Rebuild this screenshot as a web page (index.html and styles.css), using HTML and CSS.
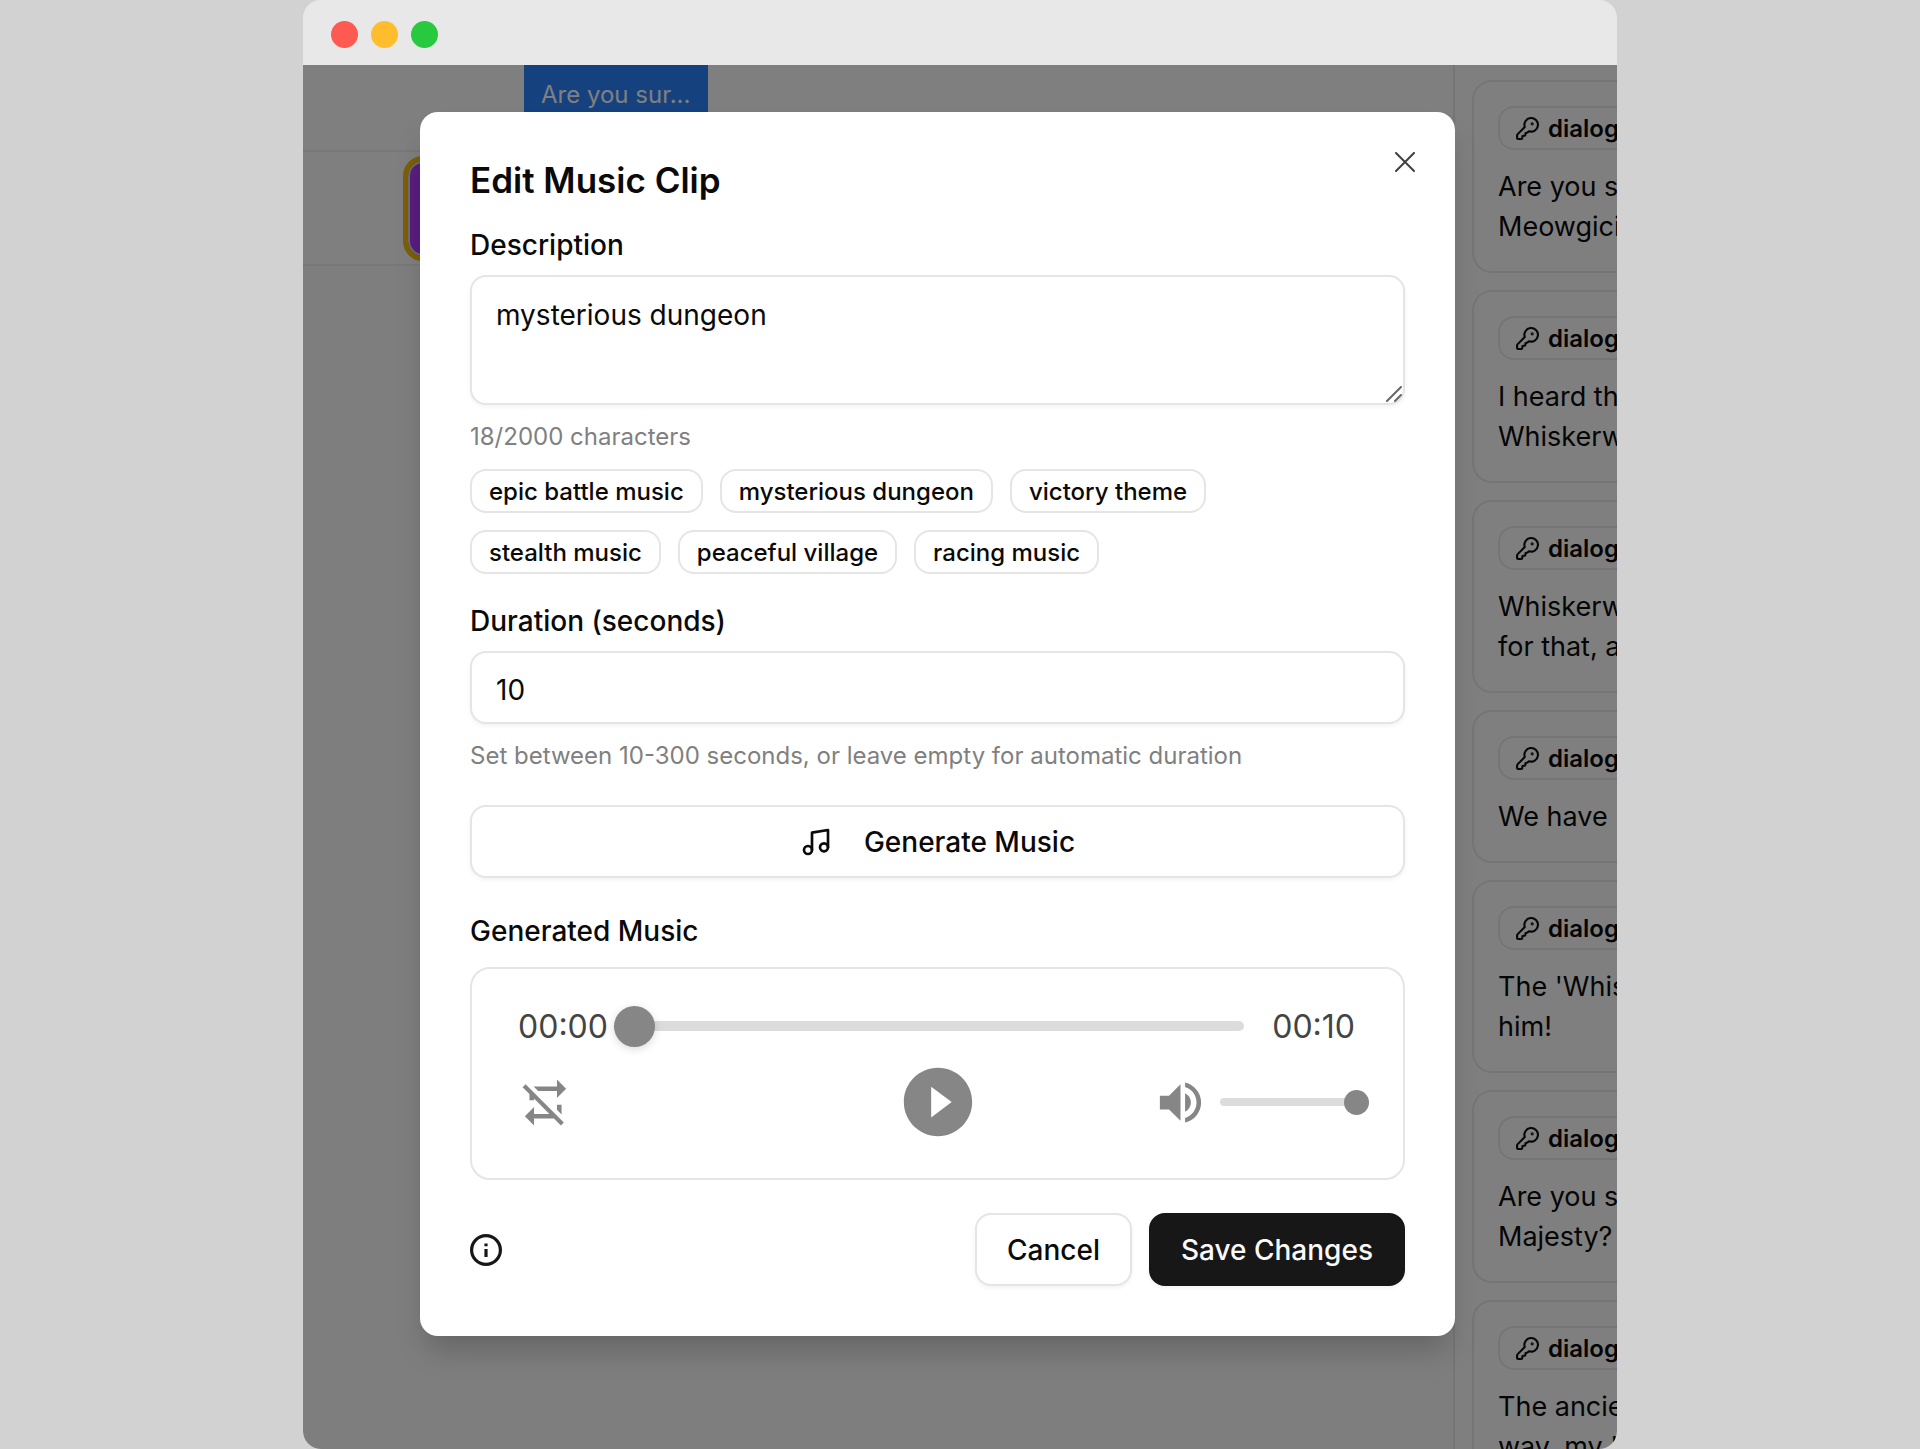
FILE: index.html
```html
<!DOCTYPE html>
<html lang="en">
<head>
    <meta charset="UTF-8">
    <meta name="viewport" content="width=device-width, initial-scale=1.0">
    <title>Edit Music Clip</title>
    <link rel="stylesheet" href="styles.css">
</head>
<body>

    <!-- shared icons -->
    <svg class="sprite" aria-hidden="true">
        <symbol id="icon-key" viewBox="0 0 24 24">
            <path d="M2.6 17.4A2 2 0 0 0 2 18.8V21a1 1 0 0 0 1 1h3a1 1 0 0 0 1-1v-1a1 1 0 0 1 1-1h1a1 1 0 0 0 1-1v-1a1 1 0 0 1 1-1h.2a2 2 0 0 0 1.4-.6l.8-.8a6.500 6.500 0 1 0-4-4z"/>
            <circle cx="16.500" cy="7.500" r=".5" fill="currentColor"/>
        </symbol>
    </svg>

    <div class="window">
        <div class="titlebar">
            <span class="dot red"></span>
            <span class="dot yellow"></span>
            <span class="dot green"></span>
        </div>

        <div class="app">
            <main class="timeline">
                <div class="track voice-track">
                    <div class="voice-clip">Are you sur...</div>
                </div>
                <div class="track music-track">
                    <div class="music-clip"></div>
                </div>
            </main>

            <aside class="dialogs">
                <div class="dialog-list">
                    <article class="card">
                        <span class="tag"><svg><use href="#icon-key"/></svg>dialog</span>
                        <p>Are you s<br>Meowgici</p>
                    </article>
                    <article class="card">
                        <span class="tag"><svg><use href="#icon-key"/></svg>dialog</span>
                        <p>I heard th<br>Whiskerw</p>
                    </article>
                    <article class="card">
                        <span class="tag"><svg><use href="#icon-key"/></svg>dialog</span>
                        <p>Whiskerw<br>for that, a</p>
                    </article>
                    <article class="card">
                        <span class="tag"><svg><use href="#icon-key"/></svg>dialog</span>
                        <p>We have</p>
                    </article>
                    <article class="card">
                        <span class="tag"><svg><use href="#icon-key"/></svg>dialog</span>
                        <p>The 'Whis<br>him!</p>
                    </article>
                    <article class="card">
                        <span class="tag"><svg><use href="#icon-key"/></svg>dialog</span>
                        <p>Are you s<br>Majesty?</p>
                    </article>
                    <article class="card">
                        <span class="tag"><svg><use href="#icon-key"/></svg>dialog</span>
                        <p>The ancie<br>way, my '</p>
                    </article>
                </div>
            </aside>

            <div class="overlay">
                <form class="modal" role="dialog" aria-labelledby="modal-title">
                    <button type="button" class="close" aria-label="Close">
                        <svg viewBox="0 0 20 20"><path d="M1 1l18 18M19 1L1 19"/></svg>
                    </button>

                    <h2 id="modal-title">Edit Music Clip</h2>

                    <div class="form-group">
                        <label for="description">Description</label>
                        <div class="textarea-wrap">
                            <textarea id="description" name="description">mysterious dungeon</textarea>
                            <svg class="grip" viewBox="0 0 16 16"><path d="M1 15L15 1M9 15l6-6"/></svg>
                        </div>
                        <p class="hint">18/2000 characters</p>
                        <div class="chips">
                            <button type="button" class="chip">epic battle music</button>
                            <button type="button" class="chip">mysterious dungeon</button>
                            <button type="button" class="chip">victory theme</button>
                            <button type="button" class="chip">stealth music</button>
                            <button type="button" class="chip">peaceful village</button>
                            <button type="button" class="chip">racing music</button>
                        </div>
                    </div>

                    <div class="form-group">
                        <label for="duration">Duration (seconds)</label>
                        <input type="number" id="duration" name="duration" class="text-input" value="10" min="10" max="300">
                        <p class="hint">Set between 10-300 seconds, or leave empty for automatic duration</p>
                    </div>

                    <button type="button" class="btn btn-generate">
                        <svg viewBox="0 0 24 24"><path d="M9 18V5l12-2v13"/><circle cx="6" cy="18" r="3"/><circle cx="18" cy="16" r="3"/></svg>
                        Generate Music
                    </button>

                    <div class="form-group">
                        <h3>Generated Music</h3>
                        <div class="player">
                            <div class="progress">
                                <span>00:00</span>
                                <input type="range" class="seek" aria-label="Seek" min="0" max="10" value="0">
                                <span>00:10</span>
                            </div>
                            <div class="controls">
                                <button type="button" class="icon-btn loop" aria-label="Loop off">
                                    <svg viewBox="0 0 24 24"><path d="M2 5.300L3.300 4 20 20.700 18.700 22l-3-3H7v3l-4-4 4-4v3h6.700L7 10.300V11H5V8.300L2 5.300M17 13h2v4.200l-2-2V13m0-8V2l4 4-4 4V7H8.800l-2-2H17z"/></svg>
                                </button>
                                <button type="button" class="icon-btn play" aria-label="Play">
                                    <svg viewBox="0 0 24 24"><path d="M12 2C6.480 2 2 6.480 2 12s4.480 10 10 10 10-4.480 10-10S17.520 2 12 2zm-2 14.500v-9l6 4.500-6 4.500z"/></svg>
                                </button>
                                <div class="volume">
                                    <button type="button" class="icon-btn" aria-label="Mute">
                                        <svg viewBox="0 0 24 24"><path d="M3 9v6h4l5 5V4L7 9H3zm13.500 3A4.500 4.500 0 0 0 14 7.970v8.050c1.480-.73 2.500-2.250 2.500-4.020zM14 3.230v2.060c2.890.86 5 3.540 5 6.710s-2.110 5.850-5 6.710v2.060c4.010-.91 7-4.490 7-8.770s-2.990-7.860-7-8.770z"/></svg>
                                    </button>
                                    <input type="range" class="level" aria-label="Volume" min="0" max="100" value="100">
                                </div>
                            </div>
                        </div>
                    </div>

                    <div class="footer">
                        <button type="button" class="icon-btn info" aria-label="Info">
                            <svg viewBox="0 0 30 30"><circle cx="15" cy="15" r="13.500"/><path d="M15 14v7.500M15 9v2.500"/></svg>
                        </button>
                        <button type="button" class="btn">Cancel</button>
                        <button type="submit" class="btn btn-save">Save Changes</button>
                    </div>
                </form>
            </div>
        </div>
    </div>

</body>
</html>
```
FILE: styles.css
```css
* {
    margin: 0;
    padding: 0;
    box-sizing: border-box;
}

body {
    font-family: Inter, sans-serif;
    font-size: 28px;
    color: #0a0a0a;
    background: #d2d2d2;
}

button, input, textarea {
    font: inherit;
    color: inherit;
}

button {
    cursor: pointer;
}

svg {
    display: block;
    fill: none;
    stroke: currentColor;
    stroke-width: 2;
    stroke-linecap: round;
    stroke-linejoin: round;
}

.sprite {
    display: none;
}

/* window */

.window {
    width: 100%;
    max-width: 1314px;
    height: 100vh;
    margin: 0 auto;
    display: flex;
    flex-direction: column;
    border-radius: 18px;
    overflow: hidden;
}

.titlebar {
    flex: none;
    height: 65px;
    padding: 4px 28px 0;
    display: flex;
    align-items: center;
    gap: 13px;
    background: #e8e8e8;
}

.dot {
    width: 27px;
    height: 27px;
    border-radius: 50%;
}

.red {
    background: #ff5a52;
}

.yellow {
    background: #ffbd2e;
}

.green {
    background: #27c93f;
}

.app {
    position: relative;
    flex: 1;
    min-height: 0;
    display: flex;
    background: #fff;
}

/* timeline */

.timeline {
    flex: 1;
    min-width: 0;
    background: #fcfcfc;
}

.track {
    background: #fff;
    border-bottom: 2px solid #f0f0f0;
}

.voice-track {
    height: 87px;
    padding-left: 221px;
}

.voice-clip {
    width: 184px;
    height: 60px;
    padding: 12px 17px;
    font-size: 24px;
    line-height: 36px;
    white-space: nowrap;
    background: #2a82ff;
    color: #fff;
}

.music-track {
    height: 114px;
    padding: 4px 0 0 100px;
}

.music-clip {
    width: 400px;
    height: 105px;
    border: 5px solid #fabf0c;
    border-radius: 20px;
    background: #b23cff;
    box-shadow: inset 0 0 0 2px #ddd;
}

/* dialogs */

.dialogs {
    flex: 0 0 164px;
    padding: 15px 0 0 17px;
    border-left: 2px solid #eaeaea;
    overflow: hidden;
}

.dialog-list {
    width: 500px;
    display: flex;
    flex-direction: column;
    gap: 17px;
}

.card {
    padding: 24px;
    border: 2px solid #eaeaea;
    border-radius: 20px;
}

.card p {
    margin-top: 17px;
    font-size: 27px;
    line-height: 40px;
    white-space: nowrap;
}

.tag {
    width: 200px;
    height: 44px;
    padding: 0 15px;
    display: flex;
    align-items: center;
    gap: 8px;
    border: 2px solid #eaeaea;
    border-radius: 16px;
    font-size: 24px;
    font-weight: 600;
}

.tag svg {
    width: 25px;
    height: 25px;
}

/* modal */

.overlay {
    position: absolute;
    inset: 0;
    padding: 47px 162px 0 117px;
    background: rgba(0, 0, 0, 0.5);
}

.modal {
    position: relative;
    padding: 50px;
    display: flex;
    flex-direction: column;
    gap: 33px;
    background: #fff;
    border-radius: 18px;
    box-shadow: 0 20px 30px -6px rgba(0, 0, 0, 0.2);
}

.close {
    position: absolute;
    top: 40px;
    right: 40px;
    padding: 0;
    border: none;
    background: none;
    color: #404040;
}

.close svg {
    width: 20px;
    height: 20px;
}

h2 {
    font-size: 35px;
    line-height: 36px;
    font-weight: 600;
}

h3 {
    padding: 6px 0;
    font-size: 28px;
    line-height: 28px;
    font-weight: 500;
}

.form-group {
    display: flex;
    flex-direction: column;
    gap: 16px;
}

label {
    line-height: 28px;
    font-weight: 500;
}

.hint {
    font-size: 24px;
    line-height: 32px;
    color: #808080;
}

.textarea-wrap {
    position: relative;
}

textarea, .text-input {
    width: 100%;
    display: block;
    padding: 18px 24px 14px;
    border: 2px solid #e5e5e5;
    border-radius: 16px;
    background: #fff;
    box-shadow: 0 2px 4px rgba(0, 0, 0, 0.05);
    outline: none;
}

textarea {
    height: 130px;
    line-height: 40px;
    resize: none;
}

.text-input {
    height: 73px;
    appearance: textfield;
}

.text-input::-webkit-inner-spin-button {
    appearance: none;
}

.grip {
    position: absolute;
    right: 3px;
    bottom: 3px;
    width: 16px;
    height: 16px;
    color: #666;
}

.chips {
    display: flex;
    flex-wrap: wrap;
    gap: 17px;
}

.chip {
    height: 44px;
    padding: 0 17px;
    border: 2px solid #e5e5e5;
    border-radius: 16px;
    background: #fff;
    font-size: 24px;
    font-weight: 500;
}

.btn {
    height: 73px;
    padding: 0 30px;
    border: 2px solid #e5e5e5;
    border-radius: 16px;
    background: #fff;
    box-shadow: 0 2px 4px rgba(0, 0, 0, 0.05);
    font-weight: 500;
}

.btn-generate {
    display: flex;
    align-items: center;
    justify-content: center;
    gap: 32px;
}

.btn-generate svg {
    width: 32px;
    height: 32px;
}

.btn-save {
    border-color: #171717;
    background: #171717;
    color: #fafafa;
}

/* player */

.player {
    height: 213px;
    padding: 32px 34px 0;
    border: 2px solid #e5e5e5;
    border-radius: 20px;
}

.progress {
    display: flex;
    align-items: center;
    height: 50px;
    padding: 0 14px 0 12px;
    font-size: 32px;
    color: #444;
}

.progress .seek {
    flex: 1;
    min-width: 0;
    margin: 0 28px 0 6px;
}

input[type="range"] {
    appearance: none;
    border-radius: 5px;
    background: #dcdcdc;
}

input[type="range"]::-webkit-slider-thumb {
    appearance: none;
    border-radius: 50%;
    background: #868686;
}

.seek {
    height: 10px;
}

.seek::-webkit-slider-thumb {
    width: 41px;
    height: 41px;
    box-shadow: 0 2px 8px rgba(0, 0, 0, 0.15);
}

.level {
    width: 149px;
    height: 8px;
}

.level::-webkit-slider-thumb {
    width: 25px;
    height: 25px;
}

.controls {
    display: grid;
    grid-template-columns: 1fr auto 1fr;
    align-items: center;
    margin-top: 10px;
}

.icon-btn {
    border: none;
    background: none;
    color: #868686;
}

.icon-btn svg {
    width: 55px;
    height: 55px;
    fill: currentColor;
    stroke: none;
}

.loop {
    justify-self: start;
    margin-left: 12px;
}

.play svg {
    width: 82px;
    height: 82px;
}

.volume {
    display: flex;
    align-items: center;
    justify-content: flex-end;
    gap: 12px;
}

/* footer */

.footer {
    display: flex;
    align-items: center;
    gap: 17px;
}

.info {
    margin-right: auto;
}

.icon-btn.info {
    color: #171717;
}

.info svg {
    width: 32px;
    height: 32px;
    fill: none;
    stroke: currentColor;
    stroke-width: 3;
    stroke-linecap: butt;
}
```
